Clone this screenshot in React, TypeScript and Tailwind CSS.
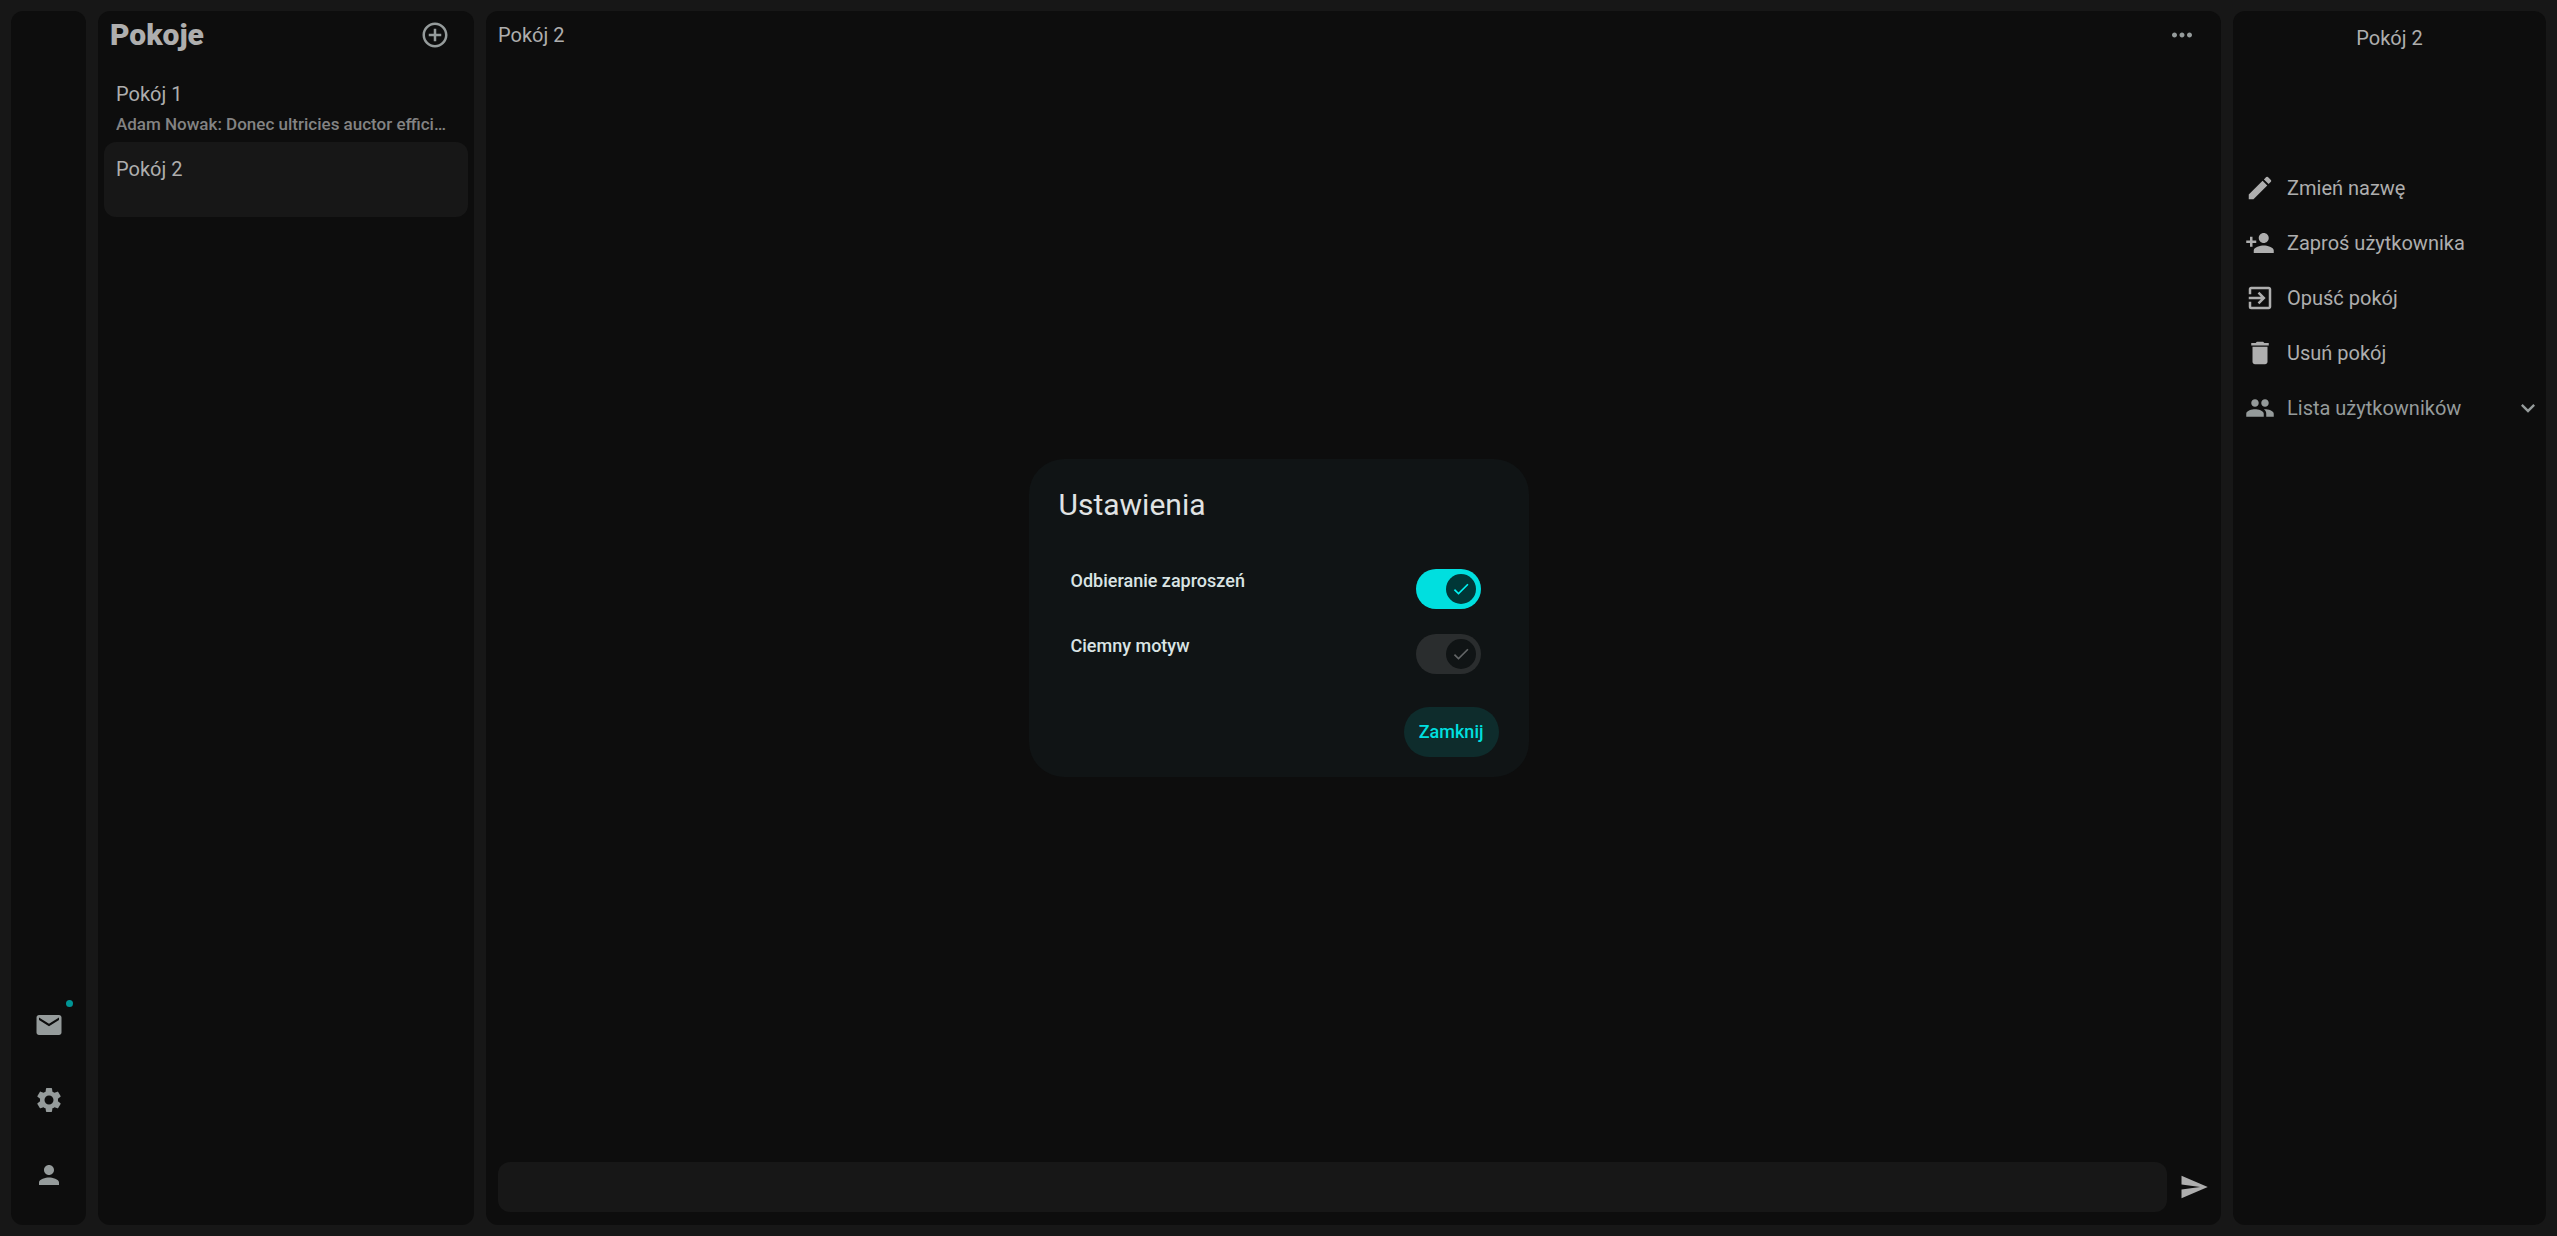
import { ReactNode, useState } from "react";
import {
  MdAddCircleOutline,
  MdCheck,
  MdDelete,
  MdEdit,
  MdExitToApp,
  MdExpandMore,
  MdMail,
  MdMoreHoriz,
  MdPeople,
  MdPerson,
  MdPersonAdd,
  MdSend,
  MdSettings,
} from "react-icons/md";

const rooms = [
  { id: 1, name: "Pokój 1", last: "Adam Nowak: Donec ultricies auctor effici…" },
  { id: 2, name: "Pokój 2", last: "" },
];

function RailButton({ label, badge, children }: { label: string; badge?: boolean; children: ReactNode }) {
  return (
    <button type="button" aria-label={label} className="relative flex h-[75px] w-full items-center justify-center text-[#959b9b]">
      {children}
      {badge && <span className="absolute top-[13px] right-[13px] size-[7px] rounded-full bg-[#009595]" />}
    </button>
  );
}

function Action({ icon, label }: { icon: ReactNode; label: string }) {
  return (
    <button type="button" className="flex h-[55px] items-center gap-3 px-3 text-left text-[#aeaeae]">
      {icon}
      {label}
    </button>
  );
}

function Toggle({ id, label, disabled }: { id: string; label: string; disabled?: boolean }) {
  const [on, setOn] = useState(true);
  return (
    <div className="flex h-[65px] items-start justify-between">
      <label htmlFor={id} className="pt-4 text-lg leading-6 font-medium text-[#dae4e4]">
        {label}
      </label>
      <span className="relative mt-4 flex h-10 w-[65px]">
        <input
          id={id}
          type="checkbox"
          role="switch"
          checked={on}
          disabled={disabled}
          onChange={(e) => setOn(e.target.checked)}
          className="peer h-10 w-[65px] appearance-none rounded-full bg-[#2a2d2e] enabled:checked:bg-[#00dfdf]"
        />
        <span className="pointer-events-none absolute top-[5px] left-[5px] flex size-[30px] items-center justify-center rounded-full bg-[#101415] text-[#636667] peer-checked:left-[30px] peer-enabled:bg-[#003737] peer-enabled:text-[#00f5f5]">
          <MdCheck size={20} />
        </span>
      </span>
    </div>
  );
}

export default function App() {
  return (
    <div className="relative flex h-screen gap-3 bg-[#171717] p-[11px] font-[Roboto,sans-serif] text-xl leading-[30px] text-[#aeaeae]">
      <nav className="flex w-[75px] shrink-0 flex-col justify-end rounded-xl bg-[#0d0d0d] pb-[13px]">
        <RailButton label="Zaproszenia" badge>
          <MdMail size={30} />
        </RailButton>
        <RailButton label="Ustawienia">
          <MdSettings size={30} />
        </RailButton>
        <RailButton label="Profil">
          <MdPerson size={30} />
        </RailButton>
      </nav>

      <aside className="flex w-[376px] shrink-0 flex-col rounded-xl bg-[#0d0d0d] px-[6px]">
        <header className="flex h-12 items-center justify-between pr-3 pl-[6px]">
          <h1 className="text-3xl leading-9 font-black">Pokoje</h1>
          <button type="button" aria-label="Dodaj pokój" className="p-[6px] text-[#959b9b]">
            <MdAddCircleOutline size={30} />
          </button>
        </header>
        <ul className="pt-2">
          {rooms.map((room) => (
            <li key={room.id}>
              <button
                type="button"
                className={
                  room.id === 2
                    ? "flex h-[75px] w-full flex-col rounded-xl bg-[#171717] px-3 pt-3 text-left"
                    : "flex h-[75px] w-full flex-col rounded-xl px-3 pt-3 text-left"
                }
              >
                <span>{room.name}</span>
                <span className="w-full truncate text-[17px] font-medium text-[#838383]">{room.last}</span>
              </button>
            </li>
          ))}
        </ul>
      </aside>

      <main className="flex min-w-0 flex-1 flex-col rounded-xl bg-[#0d0d0d] px-3 pb-[13px]">
        <header className="flex h-12 items-center justify-between pr-3">
          <h2>Pokój 2</h2>
          <button type="button" aria-label="Więcej" className="text-[#959b9b]">
            <MdMoreHoriz size={30} />
          </button>
        </header>
        <div className="flex-1" />
        <form className="flex items-center gap-3" onSubmit={(e) => e.preventDefault()}>
          <input aria-label="Wiadomość" className="h-[50px] min-w-0 flex-1 rounded-xl bg-[#171717] px-4 outline-none" />
          <button type="submit" aria-label="Wyślij">
            <MdSend size={30} />
          </button>
        </form>
      </main>

      <aside className="flex w-[313px] shrink-0 flex-col rounded-xl bg-[#0d0d0d]">
        <h2 className="h-[149px] pt-3 text-center">Pokój 2</h2>
        <Action icon={<MdEdit size={30} />} label="Zmień nazwę" />
        <Action icon={<MdPersonAdd size={30} />} label="Zaproś użytkownika" />
        <Action icon={<MdExitToApp size={30} />} label="Opuść pokój" />
        <Action icon={<MdDelete size={30} />} label="Usuń pokój" />
        <button type="button" aria-expanded="false" className="flex h-[55px] items-center gap-3 pr-1 pl-3 text-left text-[#959b9b]">
          <MdPeople size={30} />
          <span className="flex-1">Lista użytkowników</span>
          <MdExpandMore size={28} />
        </button>
      </aside>

      <div className="absolute inset-0 flex items-center justify-center">
        <section
          role="dialog"
          aria-labelledby="settings-title"
          className="flex w-[500px] flex-col rounded-[35px] bg-[#101415] px-[30px] pt-[26px] pb-5"
        >
          <h2 id="settings-title" className="mb-7 text-3xl leading-10 text-[#e0e3e3]">
            Ustawienia
          </h2>
          <div className="pr-[18px] pl-3">
            <Toggle id="invites" label="Odbieranie zaproszeń" />
            <Toggle id="dark" label="Ciemny motyw" disabled />
          </div>
          <button
            type="button"
            className="mt-6 flex h-[50px] items-center self-end rounded-full bg-[#0e2c2c] px-[15px] text-lg font-medium text-[#00dfdf]"
          >
            Zamknij
          </button>
        </section>
      </div>
    </div>
  );
}
